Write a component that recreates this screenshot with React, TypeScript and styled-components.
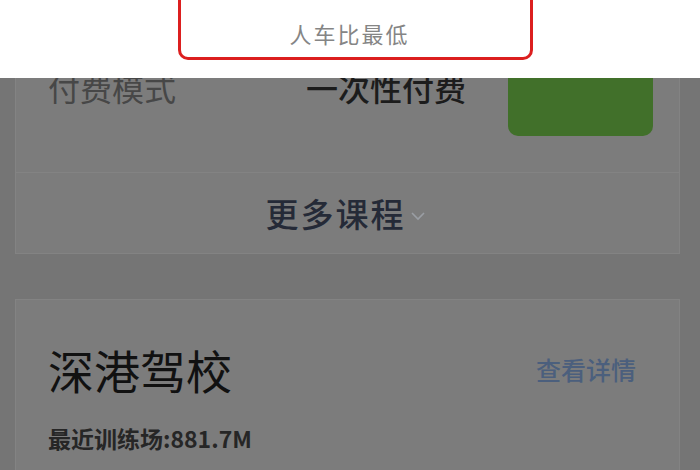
import React from "react";
import styled, { createGlobalStyle } from "styled-components";

const GlobalStyle = createGlobalStyle`
  html, body {
    margin: 0;
    padding: 0;
    background: #757575;
    font-family: "Noto Sans CJK SC", "Noto Sans", sans-serif;
  }
  * {
    box-sizing: border-box;
  }
`;

export default function App() {
  return (
    <>
      <GlobalStyle />
      <StyledPage>
        <StyledTopBar>
          <StyledFilterBox>
            <StyledFilterText>人车比最低</StyledFilterText>
          </StyledFilterBox>
        </StyledTopBar>

        <StyledContent>
          <StyledCourseCard>
            <StyledPayRow>
              <StyledPayLabel>付费模式</StyledPayLabel>
              <StyledPayValue>一次性付费</StyledPayValue>
              <StyledGreenButton />
            </StyledPayRow>
            <StyledMoreRow>
              <StyledMoreText>更多课程</StyledMoreText>
              <StyledChevron viewBox="0 0 16 10">
                <polyline points="2,2 8,8 14,2" />
              </StyledChevron>
            </StyledMoreRow>
          </StyledCourseCard>

          <StyledSchoolCard>
            <StyledSchoolHeader>
              <StyledSchoolName>深港驾校</StyledSchoolName>
              <StyledDetailLink>查看详情</StyledDetailLink>
            </StyledSchoolHeader>
            <StyledDistance>最近训练场:881.7M</StyledDistance>
          </StyledSchoolCard>
        </StyledContent>
      </StyledPage>
    </>
  );
}

const StyledPage = styled.div`
  width: 700px;
  height: 470px;
  overflow: hidden;
  display: flex;
  flex-direction: column;
  background: #757575;
`;

const StyledTopBar = styled.header`
  position: relative;
  z-index: 2;
  height: 78px;
  flex-shrink: 0;
  background: #ffffff;
  display: flex;
  align-items: flex-end;
  padding: 0 0 18px 178px;
  overflow: hidden;
`;

const StyledFilterBox = styled.div`
  width: 355px;
  height: 100px;
  flex-shrink: 0;
  border: 3px solid #dc1f1f;
  border-radius: 10px;
  display: flex;
  align-items: flex-end;
  justify-content: center;
  padding: 0 12px 12px 0;
`;

const StyledFilterText = styled.span`
  font-size: 22px;
  line-height: 24px;
  letter-spacing: 2px;
  color: #858585;
`;

const StyledContent = styled.main`
  margin-top: -20px;
  padding: 0 20px 0 15px;
  display: flex;
  flex-direction: column;
  gap: 45px;
`;

const StyledCourseCard = styled.section`
  background: #7c7c7c;
  border: 1px solid #838383;
  border-top: none;
`;

const StyledPayRow = styled.div`
  height: 115px;
  display: grid;
  grid-template-columns: 258px 202px 145px;
  align-items: start;
  padding-left: 32px;
  border-bottom: 1px solid #838383;
`;

const StyledPayLabel = styled.span`
  margin-top: 13px;
  font-size: 32px;
  line-height: 32px;
  color: #474747;
`;

const StyledPayValue = styled.span`
  margin-top: 13px;
  font-size: 32px;
  line-height: 32px;
  font-weight: 500;
  color: #1c1c1c;
`;

const StyledGreenButton = styled.div`
  height: 78px;
  background: #41702a;
  border-radius: 10px;
`;

const StyledMoreRow = styled.div`
  height: 80px;
  display: flex;
  align-items: center;
  justify-content: center;
  gap: 4px;
  padding-right: 4px;
`;

const StyledMoreText = styled.span`
  font-size: 33px;
  line-height: 36px;
  letter-spacing: 2px;
  font-weight: 500;
  color: #252a37;
`;

const StyledChevron = styled.svg`
  width: 16px;
  height: 10px;
  margin-top: 6px;
  fill: none;
  stroke: #9a9ea4;
  stroke-width: 1.6;
`;

const StyledSchoolCard = styled.section`
  background: #7c7c7c;
  border: 1px solid #838383;
  border-bottom: none;
  padding: 46px 43px 30px 32px;
  flex: 1;
`;

const StyledSchoolHeader = styled.div`
  display: flex;
  align-items: center;
  justify-content: space-between;
`;

const StyledSchoolName = styled.h2`
  margin: 0;
  font-size: 46px;
  line-height: 46px;
  font-weight: 400;
  color: #111111;
`;

const StyledDetailLink = styled.span`
  font-size: 25px;
  line-height: 26px;
  font-weight: 500;
  color: #4b5f7d;
`;

const StyledDistance = styled.p`
  margin: 35px 0 0;
  font-size: 23px;
  line-height: 22px;
  font-weight: 700;
  color: #262626;
`;
